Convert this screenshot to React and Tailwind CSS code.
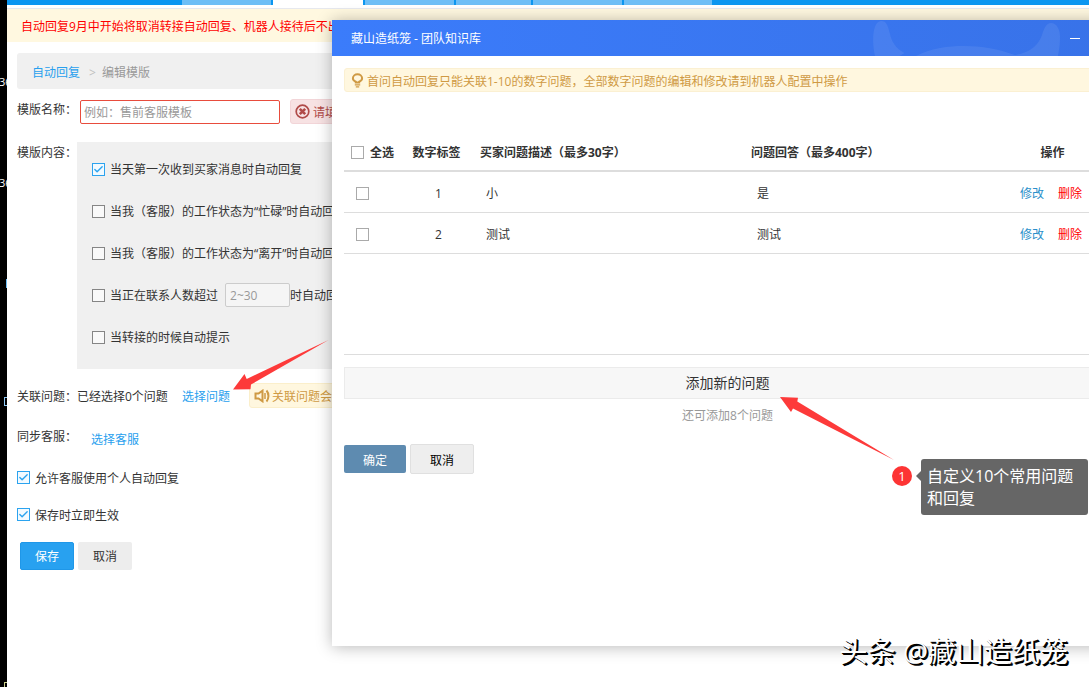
import { useState } from 'react';
import { Check } from 'lucide-react';

const NAV_TABS = [
  'w-[89px] bg-[#6dbef6]',
  'w-[90px] bg-white',
  'w-[89px] bg-[#6dbef6]',
  'w-[75px] bg-[#6dbef6]',
  'w-[89px] bg-[#6dbef6]',
  'w-[88px] bg-[#6dbef6]',
];

const QUESTIONS = [
  { id: 1, question: '小', answer: '是' },
  { id: 2, question: '测试', answer: '测试' },
];

const Checkbox = ({ light, ...props }) => (
  <span className="relative inline-flex w-[13px] h-[13px] shrink-0">
    <input
      type="checkbox"
      className={`peer appearance-none w-[13px] h-[13px] border bg-white/60 checked:border-[#2ba3ef] checked:bg-[#f2faff] ${
        light ? 'border-[#aaaaaa]' : 'border-[#858585]'
      }`}
      {...props}
    />
    <Check
      className="absolute inset-0 m-auto w-[11px] h-[11px] text-[#2ba3ef] opacity-0 peer-checked:opacity-100 pointer-events-none"
      strokeWidth={3}
    />
  </span>
);

const CheckRow = ({ label, defaultChecked, children }) => (
  <div className="flex items-center h-[42px] whitespace-nowrap">
    <label className="flex items-center gap-[5px]">
      <Checkbox defaultChecked={defaultChecked} />
      <span className="pt-[2px]">{label}</span>
    </label>
    {children}
  </div>
);

const BulbIcon = () => (
  <svg className="w-[13px] h-[15px] shrink-0" viewBox="0 0 13 15" fill="none" stroke="#cf9a44">
    <path d="M4.800 9.500V8.700C3 8 1.900 6.800 1.900 5.300a4.600 4.100 0 0 1 9.200 0c0 1.500-1.100 2.700-2.900 3.400v.8z" strokeWidth="2" />
    <path d="M3.800 11.800h5.400M4.800 13.800h3.400" strokeWidth="1.300" />
  </svg>
);

const SpeakerIcon = () => (
  <svg className="w-[16px] h-[14px] shrink-0" viewBox="0 0 16 14" fill="none" stroke="#cf9a44" strokeWidth="2">
    <path d="M1.500 4.500h3L8.500 1.700v10.600L4.500 9.500h-3z" />
    <path d="M11 4v6" strokeWidth="1.500" />
    <path d="M12.500 1.500c2.600 3 2.600 8 0 11" />
  </svg>
);

const ErrorIcon = () => (
  <svg className="w-[15px] h-[15px] shrink-0" viewBox="0 0 15 15" fill="none" stroke="#b04a48">
    <circle cx="7.500" cy="7.500" r="6.300" strokeWidth="1.700" />
    <path d="M4.800 4.800l5.400 5.400M10.200 4.800l-5.400 5.400" strokeWidth="2.600" />
  </svg>
);

const DesktopEdge = () => (
  <div className="relative w-[7px] shrink-0 bg-black text-white text-[11px] leading-[14px] overflow-hidden" aria-hidden="true">
    <span className="absolute top-[75px] -left-px">36</span>
    <span className="absolute top-[176px] -left-px">36</span>
    <span className="absolute top-[279px] left-[6px] w-[6px] h-[9px] bg-[#6dbef6]" />
    <span className="absolute top-[397px] left-[4px] w-[6px] h-[9px] border border-[#8fc8f4] border-r-0" />
    <span className="absolute top-[682px] left-[4px] w-[6px] h-[9px] border border-[#c9cf8a]" />
  </div>
);

const TemplateForm = () => (
  <form className="pl-[10px] text-[#333]" onSubmit={(e) => e.preventDefault()}>
    <nav className="flex items-center h-[36px] mt-[11px] pt-[3px] pl-[15px] bg-[#f0f0f0] rounded-[3px]">
      <a href="#" className="text-[#28a0ee]">自动回复</a>
      <span className="ml-[9px] mr-[6px] text-[#c0c0c0]">&gt;</span>
      <span className="text-[#999]">编辑模版</span>
    </nav>

    <div className="flex items-start mt-[10px] h-[25px]">
      <label htmlFor="tpl-name" className="w-[63px] leading-[22px] whitespace-nowrap">模版名称：</label>
      <input
        id="tpl-name"
        type="text"
        placeholder="例如：售前客服模板"
        className="w-[200px] h-[24px] mt-px pt-px px-[3px] bg-white border border-[#e84c3d] rounded-[2px] placeholder:text-[#999] outline-none"
      />
      <span className="flex items-center gap-[3px] h-[25px] ml-[10px] px-[4px] bg-[#f7e2e3] border border-[#f2d5d8] rounded-[3px] text-[#b04a48] whitespace-nowrap">
        <ErrorIcon />
        <span className="pt-[2px]">请填写</span>
      </span>
    </div>

    <div className="flex items-start mt-[18px]">
      <span className="w-[60px] leading-[22px] whitespace-nowrap">模版内容：</span>
      <div className="flex-1 pt-[6px] pb-[11px] pl-[15px] bg-[#f0f0f0]">
        <CheckRow label="当天第一次收到买家消息时自动回复" defaultChecked />
        <CheckRow label="当我（客服）的工作状态为“忙碌”时自动回复" />
        <CheckRow label="当我（客服）的工作状态为“离开”时自动回复" />
        <CheckRow label="当正在联系人数超过">
          <input
            type="text"
            aria-label="联系人数"
            placeholder="2~30"
            className="w-[65px] h-[24px] ml-[7px] px-[4px] bg-[#f5f5f5] border border-[#ccc] rounded-[2px] placeholder:text-[#999] outline-none"
          />
          <span className="pt-[2px]">时自动回复</span>
        </CheckRow>
        <CheckRow label="当转接的时候自动提示" />
      </div>
    </div>

    <div className="flex items-center h-[25px] mt-[14px] whitespace-nowrap">
      <span className="w-[60px] pt-[2px]">关联问题：</span>
      <span className="pt-[2px]">已经选择0个问题</span>
      <a href="#" className="ml-[14px] pt-[2px] text-[#28a0ee]">选择问题</a>
      <span className="flex items-center gap-[2px] h-[25px] ml-[19px] px-[4px] bg-[#fff7df] border border-[#fbefcb] rounded-[3px] text-[#cf9a44]">
        <SpeakerIcon />
        <span className="pt-[2px]">关联问题会</span>
      </span>
    </div>

    <div className="flex items-start h-[24px] mt-[18px] whitespace-nowrap">
      <span className="w-[74px] leading-[22px]">同步客服：</span>
      <a href="#" className="pt-[5px] text-[#28a0ee]">选择客服</a>
    </div>

    <div className="mt-[9px]">
      <label className="flex items-center gap-[5px] h-[37px]">
        <Checkbox defaultChecked />
        <span className="pt-[2px]">允许客服使用个人自动回复</span>
      </label>
      <label className="flex items-center gap-[5px] h-[37px]">
        <Checkbox defaultChecked />
        <span className="pt-[2px]">保存时立即生效</span>
      </label>
    </div>

    <div className="flex gap-[4px] mt-[9px] pl-[3px]">
      <button type="submit" className="w-[54px] h-[28px] pt-px bg-[#28a1f0] border border-[#1f97e8] rounded-[2px] text-white">保存</button>
      <button type="button" className="w-[54px] h-[28px] pt-px bg-[#ededed] rounded-[2px]">取消</button>
    </div>
  </form>
);

const KnowledgeDialog = () => (
  <section
    role="dialog"
    aria-label="团队知识库"
    className="absolute top-[20px] left-[332px] -right-[34px] bg-white text-[#333] shadow-[0_1px_15px_rgba(0,0,0,0.28)]"
  >
    <header className="relative flex items-center justify-between h-[36px] pl-[19px] pr-[43px] bg-linear-to-r from-[#3b7cfb] to-[#3872e8] text-white">
      <h2 className="pt-[2px]">藏山造纸笼 - 团队知识库</h2>
      {/* mascot horns behind the title bar */}
      <svg className="absolute right-[60px] bottom-0 w-[192px] h-[36px]" viewBox="0 0 192 36" fill="#fff" fillOpacity="0.08">
        <path d="M4 36C1 22 1 1 10.500 1c8 0 7 14 12 22 3 5 7 8 11 10l-5 3z" />
        <path d="M45 36c16-8 32-10 48-10 18 0 34 3 51 9 18-3 24-12 27-20 2-6 4-12 9-12 6 0 9 7 9 14 0 8-1 13-2 19z" />
      </svg>
      <button type="button" aria-label="最小化" className="relative flex items-center w-[10px] h-[20px]">
        <span className="w-[10px] h-px bg-white" />
      </button>
    </header>

    <div className="px-[12px] pt-[12px] pb-[172px]">
      <p className="flex items-center gap-[3px] h-[24px] pl-[6px] bg-[#fff7df] border border-[#fbf0d2] rounded-[3px] text-[#cf9a44]">
        <BulbIcon />
        <span className="pt-[3px]">首问自动回复只能关联1-10的数字问题，全部数字问题的编辑和修改请到机器人配置中操作</span>
      </p>

      <div className="min-h-[223px] mt-[40px] border-b border-[#ddd]">
        <table className="w-full table-fixed border-separate border-spacing-0">
          <thead>
            <tr className="h-[40px] text-left [&>th]:pt-[3px] [&>th]:border-b-2 [&>th]:border-[#ddd]">
              <th className="w-[60px] pl-[7px]">
                <label className="flex items-center gap-[6px] whitespace-nowrap">
                  <Checkbox light />
                  全选
                </label>
              </th>
              <th className="w-[68px] pr-[3px] text-center whitespace-nowrap">数字标签</th>
              <th className="w-[271px] pl-[8px]">买家问题描述（最多30字）</th>
              <th className="pl-[8px]">问题回答（最多400字）</th>
              <th className="w-[120px] pl-[3px] text-center">操作</th>
            </tr>
          </thead>
          <tbody>
            {QUESTIONS.map((q) => (
              <tr key={q.id} className="h-[41px] [&>td]:pt-[3px] [&>td]:border-b [&>td]:border-[#ddd]">
                <td className="pl-[12px]">
                  <div className="flex items-center">
                    <Checkbox light aria-label={`选择${q.id}`} />
                  </div>
                </td>
                <td className="pl-px text-center">{q.id}</td>
                <td className="pl-[14px]">{q.question}</td>
                <td className="pl-[14px]">{q.answer}</td>
                <td>
                  <div className="flex justify-center gap-[14px]">
                    <a href="#" className="text-[#2a8fca]">修改</a>
                    <a href="#" className="text-[#ff0000]">删除</a>
                  </div>
                </td>
              </tr>
            ))}
          </tbody>
        </table>
      </div>

      <button type="button" className="block w-full h-[32px] mt-[12px] bg-[#f7f7f7] border border-[#ebebeb] text-[14px]">
        添加新的问题
      </button>
      <p className="mt-[7px] leading-[20px] text-center text-[#999]">还可添加8个问题</p>

      <div className="flex items-center gap-[4px] mt-[18px]">
        <button type="button" className="w-[62px] h-[28px] pt-[3px] bg-[#5e8bb0] rounded-[2px] text-white">确定</button>
        <button type="button" className="w-[64px] h-[30px] pt-[3px] bg-[#eee] border border-[#e0e0e0] rounded-[2px] text-black">取消</button>
      </div>
    </div>
  </section>
);

const Annotations = () => (
  <>
    <svg className="absolute left-[232px] top-[339px] w-[98px] h-[52px] pointer-events-none" viewBox="232 339 98 52" fill="#fd3a3a">
      <path d="M233 389.500L244.500 374l2.200 5L328.500 340 251 384.500l-.5 4.800z" />
    </svg>
    <svg className="absolute left-[779px] top-[396px] w-[116px] h-[65px] pointer-events-none" viewBox="779 396 116 65" fill="#fd3a3a">
      <path d="M780 397l18 .7-.7 3.800L894 460 793 408.500l-2 3.500z" />
    </svg>
    <div className="absolute right-px top-[459px] flex items-start">
      <span className="flex items-center justify-center w-[20px] h-[20px] mt-[7px] mr-[9px] rounded-full bg-[#fd3434] text-white text-[13px]">1</span>
      <span className="relative w-[167px] px-[6px] py-[6px] bg-[#666] rounded-[3px] text-white text-[16px] leading-[22px]">
        <span className="absolute -left-[5px] top-[12px] border-y-5 border-y-transparent border-r-5 border-r-[#666]" />
        自定义10个常用问题和回复
      </span>
    </div>
    <div className="absolute right-[21px] bottom-[16px] text-[28px] leading-[40px] text-white whitespace-nowrap [text-shadow:1px_1px_0_#000,2px_2px_0_#000]">
      头条 @藏山造纸笼
    </div>
  </>
);

const App = () => {
  const [open] = useState(true);

  return (
    <div className="relative flex min-h-screen overflow-hidden bg-white text-[12px] leading-[18px] font-['Open_Sans','Noto_Sans_CJK_SC',sans-serif]">
      <DesktopEdge />
      <main className="flex-1 min-w-0">
        <div className="h-[9px] border-b border-[#e6e8ee]">
          <div className="flex items-start gap-[2px] h-[5px] pl-[175px] bg-[#0b96f0]">
            {NAV_TABS.map((tab, i) => (
              <span key={i} className={`h-[5px] shrink-0 ${tab}`} />
            ))}
          </div>
        </div>
        <p className="h-[33px] pl-[14px] leading-[36px] bg-[#fff8e0] text-[#ff0000] whitespace-nowrap">
          自动回复9月中开始将取消转接自动回复、机器人接待后不出
        </p>
        <TemplateForm />
      </main>
      {open && <KnowledgeDialog />}
      <Annotations />
    </div>
  );
};

export default App;
